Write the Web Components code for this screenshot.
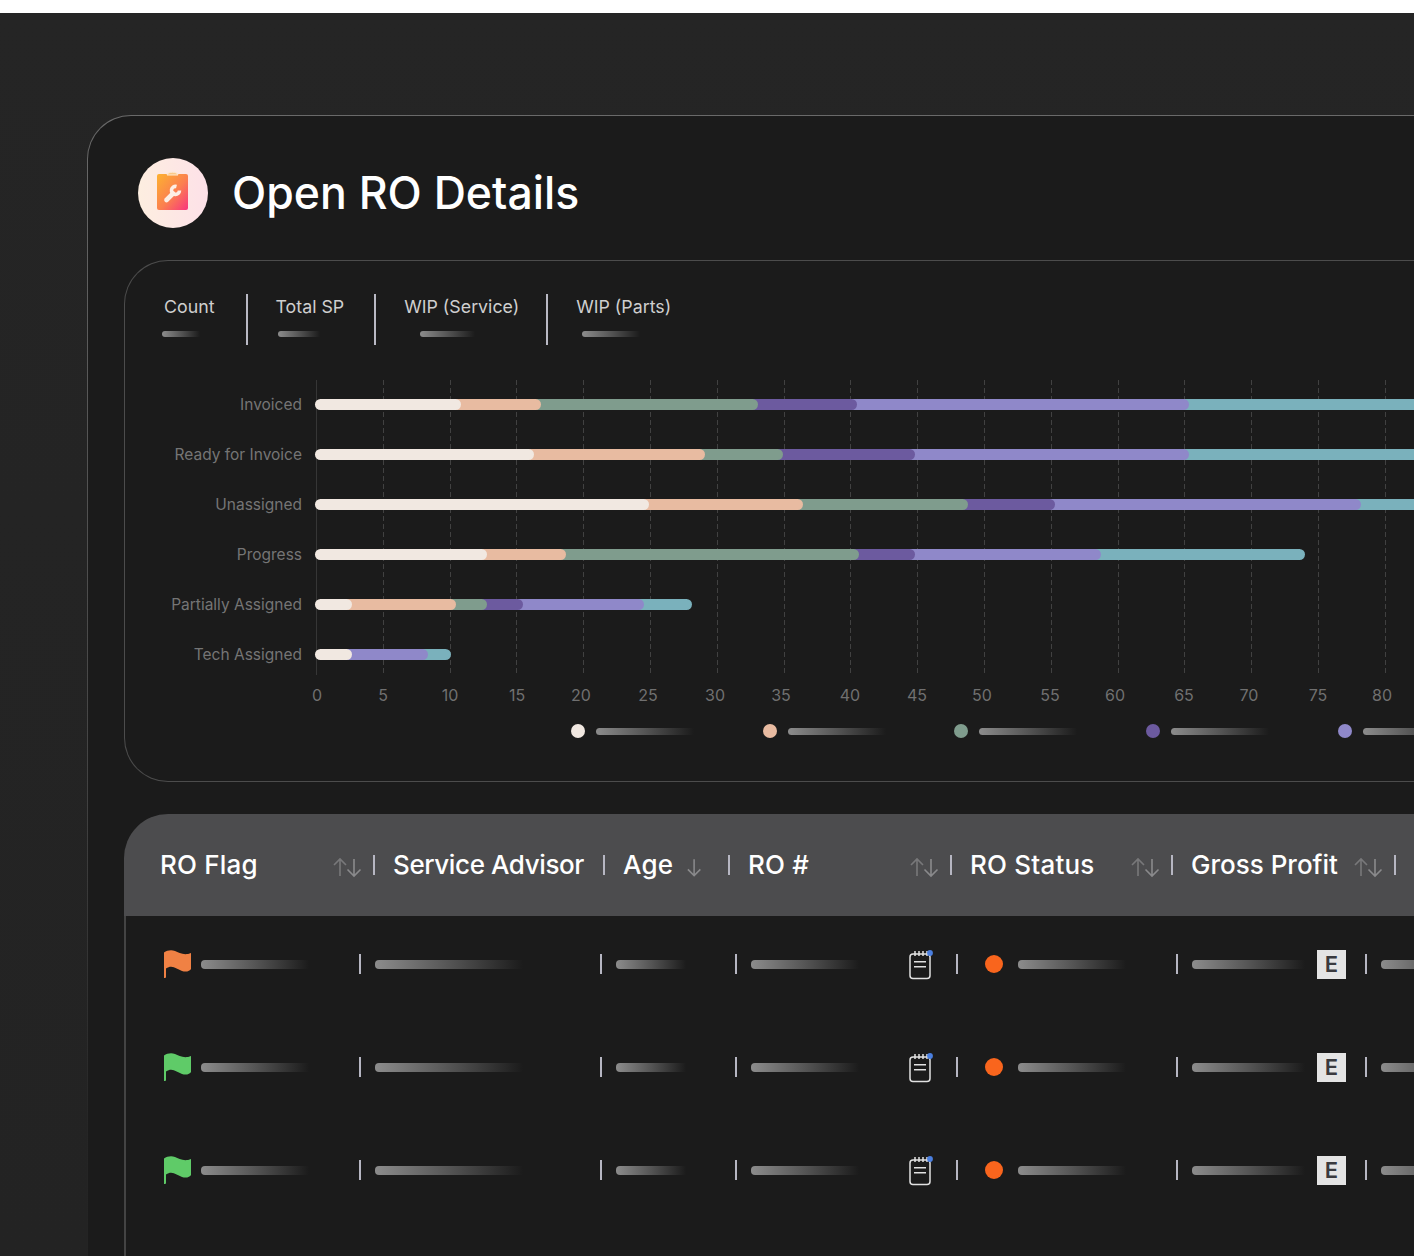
<!doctype html>
<html lang="en">
<head>
<meta charset="utf-8">
<title>Open RO Details</title>
<style>
  html, body { margin: 0; height: 100%; overflow: hidden; background: #fff; }
  body { font-family: Inter, "Liberation Sans", sans-serif; }
</style>
</head>
<body>
<ro-page>
  <ro-panel>
    <ro-title slot="title">Open RO Details</ro-title>
    <chart-card>
      <metric-tabs></metric-tabs>
      <stacked-chart></stacked-chart>
      <chart-legend></chart-legend>
    </chart-card>
    <ro-table>
      <ro-head slot="head"></ro-head>
      <ro-row flag="#f08144"></ro-row>
      <ro-row flag="#5fcb68"></ro-row>
      <ro-row flag="#5fcb68"></ro-row>
    </ro-table>
  </ro-panel>
</ro-page>

<script>
/* Small helper: every element here is a shadow root plus a style block */
const define = (name, render) => {
  customElements.define(name, class extends HTMLElement {
    connectedCallback() {
      if (this.shadowRoot) return;
      this.attachShadow({ mode: "open" }).innerHTML = render(this);
    }
  });
};

const SEGMENT = { c: "#f1e8e1", p: "#e8bba1", g: "#7f9c8d", d: "#6c5a9f", l: "#8f88c9", t: "#7ab1bc" };

define("ro-page", () => `
  <style>
    :host {
      display: block;
      height: 1243px;
      margin-top: 13px;
      padding: 102px 0 0 87px;
      box-sizing: border-box;
      overflow: hidden;
      background: linear-gradient(#252525, #242424 40%, #232323 100%);
    }
  </style>
  <slot></slot>`);

define("ro-panel", () => `
  <style>
    :host {
      display: block;
      width: 1500px;
      min-height: 1300px;
      box-sizing: border-box;
      padding: 42px 0 0 36px;
      border: 1px solid transparent;
      border-radius: 44px 0 0 0;
      background:
        linear-gradient(#1b1b1b, #1b1b1b) padding-box,
        linear-gradient(#6a6a6a, #555 25%, #444 50%, #262626 78%, #212121 100%) border-box;
    }
    .top { margin: 0 0 32px 14px; }
    .stack { display: flex; flex-direction: column; gap: 32px; }
  </style>
  <div class="top"><slot name="title"></slot></div>
  <div class="stack"><slot></slot></div>`);

define("ro-title", () => `
  <style>
    :host { display: flex; align-items: center; gap: 24px; height: 70px; }
    svg { flex: none; display: block; }
    h1 { margin: 0; font-size: 44.6px; line-height: 70px; font-weight: 500; color: #fff; }
  </style>
  <svg width="70" height="70" viewBox="0 0 70 70">
    <defs>
      <linearGradient id="disc" x1="0" x2="1" y1="0" y2="0"><stop offset="0" stop-color="#fdeee0"/><stop offset="1" stop-color="#fde1e8"/></linearGradient>
      <linearGradient id="board" x1="0" x2="1" y1="0" y2="1"><stop offset="0" stop-color="#fdb230"/><stop offset=".55" stop-color="#fb7f50"/><stop offset="1" stop-color="#f8357f"/></linearGradient>
    </defs>
    <circle cx="35" cy="35" r="35" fill="url(#disc)"/>
    <rect x="19" y="16" width="31" height="36" rx="2" fill="url(#board)"/>
    <path d="M29 17C29.500 14.800 32 14.200 34.500 14.200S39.500 14.800 40 17Z" fill="#fbc98a" stroke="#fde9d2" stroke-width="1"/>
    <path d="M28.500 42L35 35.500" stroke="#fdeee4" stroke-width="4.600" stroke-linecap="round" fill="none"/>
    <path d="M38.500 28.500A4 4 0 1 0 41.500 32.500" stroke="#fdeee4" stroke-width="3.600" fill="none"/>
  </svg>
  <h1><slot></slot></h1>`);

define("sk-bar", el => `
  <style>
    :host {
      display: block;
      flex: none;
      width: ${el.getAttribute("w")}px;
      height: ${el.getAttribute("h") || 9}px;
      border-radius: 4px 0 0 4px;
      background: linear-gradient(90deg, #8c8c8c, #555 50%, rgba(27, 27, 27, 0));
    }
  </style>`);

define("chart-card", () => `
  <style>
    :host {
      display: block;
      box-sizing: border-box;
      height: 522px;
      padding: 33px 0 0 39px;
      border: 1px solid transparent;
      border-right: 0;
      border-radius: 44px 0 0 44px;
      background:
        linear-gradient(#1b1b1b, #1b1b1b) padding-box,
        linear-gradient(#4c4c4c, #4c4c4c) border-box;
    }
  </style>
  <slot></slot>`);

define("metric-tabs", () => {
  const tabs = [["Count", 38, -2], ["Total SP", 42, 2], ["WIP (Service)", 55, 16], ["WIP (Parts)", 58, 6]];
  return `
  <style>
    :host { display: flex; height: 51px; margin-bottom: 34px; }
    .tab { display: flex; flex-direction: column; align-items: flex-start; padding: 0 30px 0 28px; border-right: 2px solid #b9b9c4; }
    .tab:nth-of-type(1) { padding: 0 31px 0 0; }
    .tab:nth-of-type(3) { padding-right: 27px; }
    .tab:last-of-type { border: 0; }
    span { font-size: 17.8px; line-height: 26px; color: #cfcfcf; white-space: nowrap; }
    sk-bar { margin-top: 11px; }
  </style>
  ${tabs.map(([t, w, o]) => `<div class="tab"><span>${t}</span><sk-bar w="${w}" h="6" style="margin-left:${o}px"></sk-bar></div>`).join("")}`;
});

define("bar-row", el => {
  let prev = 315;
  const segs = el.getAttribute("segs").split(" ").map((s, i, all) => {
    const [k, end] = s.split(":");
    const width = end - prev + (i ? 6 : 0);
    prev = +end;
    return `<i style="width:${width}px;background:${SEGMENT[k]};z-index:${all.length - i}"></i>`;
  }).join("");
  return `
  <style>
    :host { display: grid; grid-template-columns: 138px 1fr; column-gap: 13px; align-items: center; height: 50px; }
    label { text-align: right; font-size: 15.5px; color: #757575; white-space: nowrap; }
    div { display: flex; position: relative; }
    i { display: block; flex: none; height: 11px; margin-left: -6px; border-radius: 0 6px 6px 0; position: relative; }
    i:first-child { margin-left: 0; border-radius: 6px; }
  </style>
  <label>${el.getAttribute("label")}</label><div>${segs}</div>`;
});

define("stacked-chart", () => {
  const rows = [
    ["Invoiced", "c:461 p:541 g:758 d:857 l:1189 t:1500"],
    ["Ready for Invoice", "c:534 p:705 g:783 d:915 l:1189 t:1500"],
    ["Unassigned", "c:649 p:803 g:968 d:1055 l:1361 t:1500"],
    ["Progress", "c:487 p:566 g:859 d:915 l:1101 t:1305"],
    ["Partially Assigned", "c:352 p:456 g:487 d:523 l:644 t:692"],
    ["Tech Assigned", "c:352 l:428 t:451"],
  ];
  const lines = Array.from({ length: 17 });
  /* label centres are not evenly spaced in the source chart */
  const centres = [317, 383, 450, 517, 581, 648, 715, 781, 850, 917, 982, 1050, 1115, 1184, 1249, 1318, 1382];
  const axis = centres.map((c, i) =>
    `<span style="margin-left:${i ? c - centres[i - 1] - 60 : 0}px">${i * 5}</span>`).join("");
  return `
  <style>
    :host { display: block; position: relative; }
    .lines { position: absolute; left: 152px; top: 1px; height: 295px; display: flex; }
    .lines b { flex: none; width: 66.8px; height: 100%; box-sizing: border-box; }
    .lines b::before {
      content: ""; display: block; width: 1px; height: 100%;
      background: repeating-linear-gradient(#414141 0 5px, transparent 5px 8px);
    }
    .lines b:first-of-type::before { background: #363636; }
    .rows { position: relative; }
    .axis { display: flex; margin: 6px 0 0 123px; }
    .axis span { flex: none; width: 60px; text-align: center; font-size: 16px; line-height: 20px; color: #707070; }
  </style>
  <div class="lines">${lines.map(() => "<b></b>").join("")}</div>
  <div class="rows">${rows.map(([l, s]) => `<bar-row label="${l}" segs="${s}"></bar-row>`).join("")}</div>
  <div class="axis">${axis}</div>`;
});

define("chart-legend", () => `
  <style>
    :host { display: flex; margin: 19px 0 0 407px; }
    div { flex: none; width: 191.7px; display: flex; align-items: center; gap: 11px; }
    i { flex: none; width: 14px; height: 14px; border-radius: 50%; }
  </style>
  ${Object.values(SEGMENT).map(c => `<div><i style="background:${c}"></i><sk-bar w="98" h="7"></sk-bar></div>`).join("")}`);

define("ro-table", () => `
  <style>
    :host { display: block; }
    .body {
      display: flex; flex-direction: column; gap: 73px;
      min-height: 400px;
      padding: 33px 0 0 38px;
      border-left: 2px solid #444;
    }
  </style>
  <slot name="head"></slot>
  <div class="body"><slot></slot></div>`);

const sortIcon = (up = true) => `
  <svg width="30" height="22" viewBox="0 0 30 22" fill="none" stroke-width="1.6">
    ${up ? `<path d="M8 20V3M2 9l6-6 6 6" stroke="#78787a"/>` : ""}
    <path d="M22 3v17M15.500 13.500l6.500 6.500 6.500-6.500" stroke="#8a8a8c"/>
  </svg>`;

define("ro-head", () => {
  const cols = [
    ["RO Flag", 233, sortIcon()],
    ["Service Advisor", 230, "", "tight"],
    ["Age", 125, sortIcon(false), "age"],
    ["RO #", 222, sortIcon()],
    ["RO Status", 221, sortIcon()],
    ["Gross Profit", 223, sortIcon(), "flat"],
  ];
  return `
  <style>
    :host {
      display: grid;
      grid-template-columns: ${cols.map(c => c[1] + "px").join(" ")};
      height: 102px;
      padding-left: 36px;
      align-items: center;
      background: #4c4c4e;
      border-radius: 44px 0 0 0;
    }
    .cell { display: flex; align-items: center; padding-right: 18px; }
    span { font-size: 26px; font-weight: 500; color: #fff; white-space: nowrap; margin-bottom: 2px; letter-spacing: 0.2px; }
    .tight span { letter-spacing: -0.4px; }
    .flat span { letter-spacing: 0; }
    svg { display: block; margin: 4px 11px 0 auto; }
    .age svg { margin-right: 26px; }
    em { flex: none; width: 2px; height: 20px; background: #b6b6c2; margin-left: auto; }
    svg + em { margin-left: 0; }
  </style>
  ${cols.map(([t, , icon, cls]) => `<div class="cell ${cls || ""}"><span>${t}</span>${icon}<em></em></div>`).join("")}`;
});

define("note-icon", () => `
  <style>:host { display: block; flex: none; width: 24px; height: 30px; } svg { display: block; overflow: visible; }</style>
  <svg width="24" height="30" viewBox="0 0 24 30" fill="none" stroke="#e2e2e2" stroke-width="1.500">
    <rect x="2" y="5" width="20" height="24.500" rx="3"/>
    <path d="M7 2v5M11 2v5M15 2v5M19 2v5"/>
    <path d="M6 12.700h12M6 17.700h12" stroke-width="1.400"/>
    <circle cx="22" cy="4" r="2.900" fill="#4a7fe0" stroke="none"/>
  </svg>`);

define("flag-icon", el => `
  <style>:host { display: block; flex: none; width: 27px; height: 28px; } svg { display: block; }</style>
  <svg width="27" height="28" viewBox="0 0 27 28">
    <path fill="${el.getAttribute("color")}" d="M0 2.500C3 .5 7-.5 11 1C15 2.500 20 6 27 3V19C26 21 22 22.500 18 21C13 19 8 14 2 18.500V27Q2 28 1 28H0Z"/>
  </svg>`);

define("ro-row", el => `
  <style>
    :host {
      display: grid;
      grid-template-columns: 211px 241px 135px 221px 220px 189px 1fr;
      align-items: center;
      height: 30px;
    }
    .cell { display: flex; align-items: center; padding-right: 14px; min-width: 0; }
    .fill { flex: 1; display: flex; align-items: center; min-width: 0; }
    em { flex: none; width: 2px; height: 20px; background: #b6b6c2; }
    .status { padding-left: 13px; }
    .status i { flex: none; width: 18px; height: 18px; border-radius: 50%; background: #f9651d; margin-right: 15px; }
    kbd {
      flex: none; width: 29px; height: 29px; background: #e4e4e4; color: #3a3a3e;
      font: 600 22px/29px Inter, "Liberation Sans", sans-serif; text-align: center;
    }
  </style>
  <div class="cell"><div class="fill" style="gap:10px"><flag-icon color="${el.getAttribute("flag")}"></flag-icon><sk-bar w="108"></sk-bar></div><em></em></div>
  <div class="cell"><div class="fill"><sk-bar w="148"></sk-bar></div><em></em></div>
  <div class="cell"><div class="fill"><sk-bar w="70"></sk-bar></div><em></em></div>
  <div class="cell"><div class="fill" style="justify-content:space-between;padding-right:24px"><sk-bar w="108"></sk-bar><note-icon></note-icon></div><em></em></div>
  <div class="cell status"><div class="fill"><i></i><sk-bar w="108"></sk-bar></div><em></em></div>
  <div class="cell"><div class="fill" style="gap:12px"><sk-bar w="113"></sk-bar><kbd>E</kbd></div><em></em></div>
  <div class="cell"><div class="fill"><sk-bar w="108"></sk-bar></div></div>`);
</script>
</body>
</html>
